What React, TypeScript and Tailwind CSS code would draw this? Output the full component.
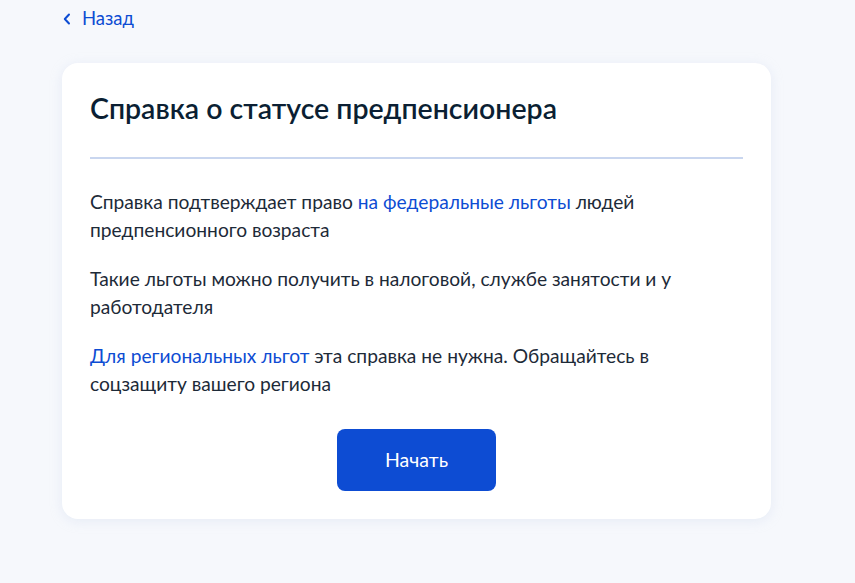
import React from "react";

export default function App() {
  return (
    <div
      className="min-h-[583px] w-full bg-[#f6f8fc] text-[#0b1f33]"
      style={{ fontFamily: "Lato, 'Noto Sans', sans-serif" }}
    >
      <div className="pl-[62px] pr-[84px]">
        <a className="flex h-[38px] items-center gap-[11px] pl-[1px] text-[18.5px] text-[#0d4cd3]">
          <svg width="8" height="12" viewBox="0 0 8 12" fill="none">
            <path d="M6 1.5 L1.8 6 L6 10.5" stroke="#0d4cd3" strokeWidth="2" strokeLinecap="round" strokeLinejoin="round" />
          </svg>
          <span>Назад</span>
        </a>
        <div className="mt-[25px] w-[709px] rounded-[16px] bg-white px-[28px] pb-[28px] pt-[27px] shadow-[0_2px_12px_rgba(200,212,236,0.35)]">
          <h1 className="text-[28.5px] font-semibold leading-[36px] text-[#0b1f33]">
            Справка о статусе предпенсионера
          </h1>
          <div className="mt-[31px] h-[2px] w-full bg-[#c9d6ef]" />
          <div className="mt-[29px] flex flex-col gap-[21px] text-[19.2px] leading-[28px] text-[#1d2a38]">
            <p>
              Справка подтверждает право <span className="text-[#0d4cd3]">на федеральные льготы</span> людей предпенсионного возраста
            </p>
            <p>Такие льготы можно получить в налоговой, службе занятости и у работодателя</p>
            <p>
              <span className="text-[#0d4cd3]">Для региональных льгот</span> эта справка не нужна. Обращайтесь в соцзащиту вашего региона
            </p>
          </div>
          <div className="mt-[31px] flex justify-center">
            <button className="h-[62px] w-[159px] rounded-[8px] bg-[#0d4cd3] text-[19.5px] text-white">
              Начать
            </button>
          </div>
        </div>
      </div>
    </div>
  );
}
